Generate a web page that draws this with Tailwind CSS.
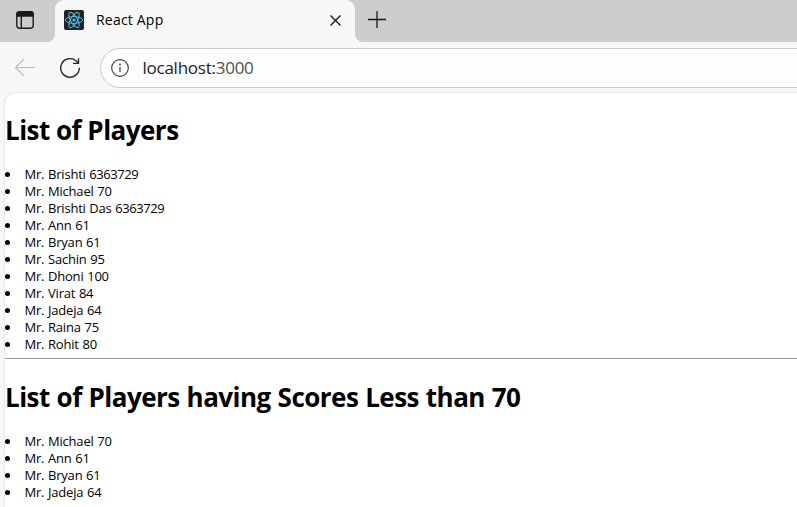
<!DOCTYPE html>
<html lang="en">
<head>
<meta charset="utf-8">
<title>React App</title>
<script src="https://cdn.jsdelivr.net/npm/@tailwindcss/browser@4"></script>
</head>
<body class="h-[507px] w-[797px] overflow-hidden bg-[#f7f7f7] font-['Open_Sans','Noto_Sans',sans-serif] text-black">
<header>
  <div class="flex h-[42px] bg-[#f7f7f7]">
    <div class="h-[42px] w-[55px] rounded-br-[8px] bg-[#cdcdcd] pt-[11px] pl-4">
      <svg class="h-[18px] w-[18px]" viewBox="0 0 18 18" fill="none" stroke="#1b1b1b" stroke-width="1.4"><rect x=".8" y=".8" width="16.4" height="16.4" rx="2.6"/><path d="M1 2.8Q1 1 3 1h12q2 0 2 1.800V5H1z" fill="#1b1b1b"/><path d="M5.300 5v12"/></svg>
    </div>
    <div class="w-[300px] bg-[#cdcdcd]">
      <div class="flex h-[42px] items-start rounded-t-[9px] bg-[#f7f7f7] pt-[10px] pl-[9px]">
        <svg class="h-5 w-5 shrink-0" viewBox="0 0 20 20" fill="none" stroke="#58bddb" stroke-width="1"><rect width="20" height="20" rx="2" fill="#20232a" stroke="none"/><ellipse cx="10" cy="10" rx="8.600" ry="3.400"/><ellipse cx="10" cy="10" rx="8.600" ry="3.400" transform="rotate(60 10 10)"/><ellipse cx="10" cy="10" rx="8.600" ry="3.400" transform="rotate(120 10 10)"/><circle cx="10" cy="10" r="1.600" fill="#58bddb" stroke="none"/></svg>
        <span class="ml-3 w-[234px] text-[14px] leading-5 tracking-[0.2px] whitespace-nowrap">React App</span>
        <svg class="mt-[5px] h-[11px] w-[11px] shrink-0" viewBox="0 0 11 11" stroke="#111" stroke-width="1.300"><path d="M.5.5l10 10M10.500.5l-10 10"/></svg>
      </div>
    </div>
    <div class="h-[42px] flex-1 rounded-bl-[8px] bg-[#cdcdcd] pt-[11px] pl-[13px]">
      <svg class="h-[18px] w-[18px]" viewBox="0 0 18 18" stroke="#1b1b1b" stroke-width="1.300"><path d="M0 8.500h18M9 0v17"/></svg>
    </div>
  </div>
  <div class="flex h-[51px] items-start pt-[6px] pl-[14px]">
    <svg class="mt-[10px] h-5 w-[21px] shrink-0" viewBox="0 0 21 20" fill="none" stroke="#bababa" stroke-width="1.200"><path d="M21 9.500H1.500M10 1L1.500 9.500 10 18"/></svg>
    <svg class="mt-[9px] ml-6 h-[22px] w-[22px] shrink-0" viewBox="0 0 22 22" fill="none" stroke="#2b2b2b" stroke-width="1.400"><path d="M20.300 10.800a9.300 9.300 0 1 1-3.300-7L19.500 6.300M19.500 1.200v5.200h-5.500"/></svg>
    <div class="-mr-6 ml-[19px] flex h-10 flex-1 items-center rounded-full border border-[#c9c9c9] bg-[#fdfdfd] pl-[9.500px]">
      <svg class="h-[18px] w-[18px]" viewBox="0 0 18 18" fill="none" stroke="#444" stroke-width="1.200"><circle cx="9" cy="9" r="8.300"/><path d="M9 8v5" stroke-width="1.300"/><circle cx="9" cy="5.500" r=".9" fill="#444" stroke="none"/></svg>
      <span class="ml-[14px] text-[17px] tracking-[-0.25px] text-[#222]">localhost:<span class="text-[#505050]">3000</span></span>
    </div>
  </div>
</header>
<main class="ml-[5px] h-[414px] rounded-tl-[10px] bg-white shadow-[0_0_2px_rgba(0,0,0,0.22)]">
  <h1 class="pt-[20px] text-[26px] leading-[35px] font-bold tracking-[-0.52px] whitespace-nowrap"><span>List of Players</span></h1>
  <ul class="pt-[18px] text-[13px] leading-[17px] tracking-[-0.2px] [word-spacing:0.5px]" id="all"></ul>
  <hr class="mt-[5px] border-t border-[#9a9a9a]">
  <h1 class="pt-[21px] text-[26px] leading-[35px] font-bold tracking-[-0.52px] whitespace-nowrap [word-spacing:0.6px]"><span>List of Players having Scores Less than 70</span></h1>
  <ul class="pt-[18px] text-[13px] leading-[17px] tracking-[-0.2px] [word-spacing:0.5px]" id="low"></ul>
</main>
<script>
const players = [["Brishti",6363729],["Michael",70],["Brishti Das",6363729],["Ann",61],["Bryan",61],["Sachin",95],["Dhoni",100],["Virat",84],["Jadeja",64],["Raina",75],["Rohit",80]];
const row = ([name, score]) => `<li class="flex items-center whitespace-nowrap"><i class="mr-[14.500px] h-[5px] w-[5px] rounded-full bg-black"></i><span>Mr. ${name} <span class="${score > 100 ? "tracking-[-0.45px]" : ""}">${score}</span></span></li>`;
document.getElementById("all").innerHTML = players.map(row).join("");
document.getElementById("low").innerHTML = players.filter(p => p[1] <= 70).map(row).join("");
</script>
</body>
</html>
